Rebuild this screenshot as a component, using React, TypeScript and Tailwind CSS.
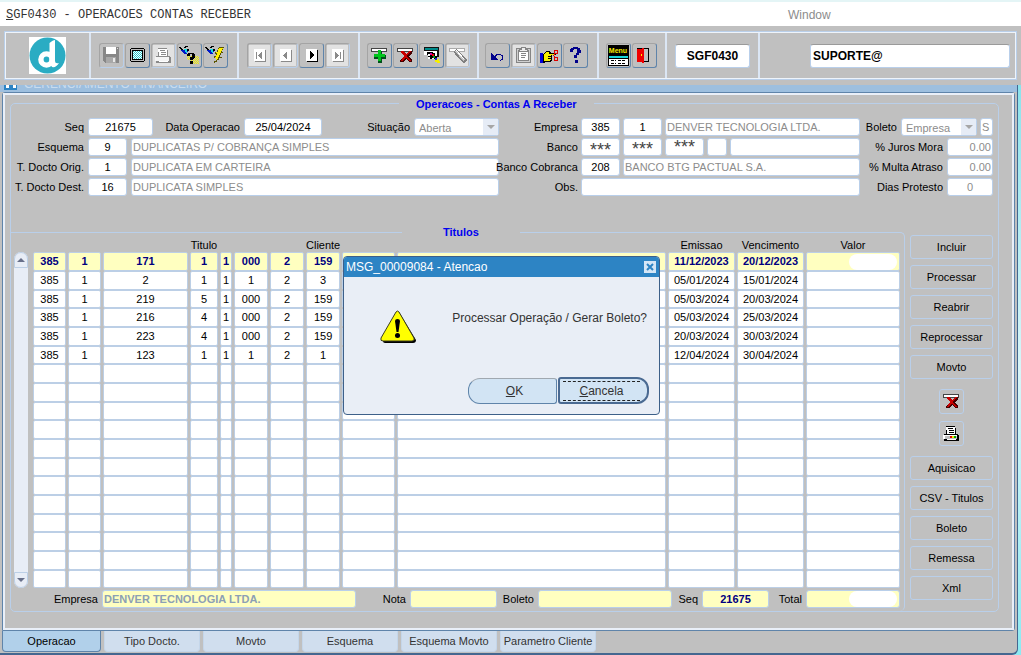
import type { InputHTMLAttributes, ReactNode } from "react"

interface Titulo {
  cells: string[]
  emissao: string
  vencimento: string
}

const titulos: Titulo[] = [
  { cells: ["385", "1", "171", "1", "1", "000", "2", "159"], emissao: "11/12/2023", vencimento: "20/12/2023" },
  { cells: ["385", "1", "2", "1", "1", "1", "2", "3"], emissao: "05/01/2024", vencimento: "15/01/2024" },
  { cells: ["385", "1", "219", "5", "1", "000", "2", "159"], emissao: "05/03/2024", vencimento: "20/03/2024" },
  { cells: ["385", "1", "216", "4", "1", "000", "2", "159"], emissao: "05/03/2024", vencimento: "25/03/2024" },
  { cells: ["385", "1", "223", "4", "1", "000", "2", "159"], emissao: "20/03/2024", vencimento: "30/03/2024" },
  { cells: ["385", "1", "123", "1", "1", "1", "2", "1"], emissao: "12/04/2024", vencimento: "30/04/2024" },
]

const TOTAL_ROWS = 18

const columnWidths = [
  "w-[33px]",
  "w-[33px]",
  "w-[85px]",
  "w-[28px]",
  "w-[12px]",
  "w-[34px]",
  "w-[34px]",
  "w-[33px]",
  "w-[53px]",
  "",
  "w-[67px]",
  "w-[67px]",
  "w-[94px]",
]

const headers = ["", "", "", "Titulo", "", "", "", "Cliente", "", "", "Emissao", "Vencimento", "Valor"]

const tabs = ["Operacao", "Tipo Docto.", "Movto", "Esquema", "Esquema Movto", "Parametro Cliente"]

/* ---------- icons ---------- */

function Icon({ children }: { children: ReactNode }) {
  return (
    <svg width="21" height="21" viewBox="0 0 21 21" shapeRendering="crispEdges" aria-hidden="true">
      {children}
    </svg>
  )
}

function Logo() {
  return (
    <svg width="37" height="37" viewBox="0 0 37 37" role="img" aria-label="Logo">
      <rect width="37" height="37" fill="#fff" />
      <circle cx="18.5" cy="18.5" r="18" fill="#2aacc3" />
      <circle cx="17.5" cy="22.5" r="5.6" fill="none" stroke="#fff" strokeWidth="5.4" />
      <path d="M20.500 6Q24 3 26 3V24Q26 27 30 26Q27 31 23 30L20.500 26Z" fill="#fff" />
    </svg>
  )
}

function SaveIcon() {
  return (
    <Icon>
      <path d="M2 2H18V18H4L2 16Z" fill="#878787" />
      <path d="M5 2H15V9H5Z" fill="#fff" />
      <path d="M5 12H15V18H5Z" fill="#a8a8a8" />
      <path d="M12 13H14V17H12Z" fill="#e8e8e8" />
      <path d="M16 3H17V4H16Z" fill="#ddd" />
    </Icon>
  )
}

function ScreenIcon() {
  return (
    <Icon>
      <path d="M4 3H17V4H18V16H17V17H4V16H3V4H4Z" fill="#000" />
      <path d="M4 4H17V16H4Z" fill="#c0c0c0" />
      <path d="M5 5H16V15H5Z" fill="#000" />
      <path d="M6 6H15V14H6Z" fill="#fff" />
      <path
        d="M6 6.500H15M7 7.500H15M6 8.500H15M7 9.500H15M6 10.500H15M7 11.500H15M6 12.500H15M7 13.500H15"
        stroke="#23c7cf"
        strokeDasharray="1 1"
      />
    </Icon>
  )
}

function PrintIcon({ color = false }: { color?: boolean }) {
  const ink = color ? "#000" : "#8a8a8a"
  return (
    <Icon>
      {!color && <path d="M0 0H21V21H0Z" fill="#e2e2e2" />}
      <path d="M5 3H14V5H15V11H5Z" fill={ink} />
      <path d="M5 4H14V11H6V7H5Z" fill="#fff" />
      <path d="M7 5.500H12M8 7.500H13M8 9.500H13" stroke={ink} />
      <path d="M3 11H17V12H18V18H3Z" fill={ink} />
      <path d="M2 12H16V16H2Z" fill={color ? "#fff" : "#f4f4f4"} />
      {color && <path d="M4 13H16V16H4Z" fill="#c0c0c0" />}
      {color && <path d="M9 13H11V15H9Z" fill="#e00000" />}
      {color && <path d="M11 13H13V15H11Z" fill="#e8e800" />}
      {color && <path d="M13 13H15V15H13Z" fill="#00a000" />}
      <path d="M6 16.500H15" stroke="#fff" />
    </Icon>
  )
}

function Bird() {
  return (
    <>
      <path d="M2 4L5 5L8 4L9 6L8 9H6L3 7Z" fill="#0018c8" />
      <path d="M5 4H8L8 7L7 8Z" fill="#15dbe0" />
      <path d="M0 2.500H2M1 3.500H3M2 4.500H4M5 2.500H7M6 1.500H9M8 4.500H10M8 5.500H10" stroke="#000" />
    </>
  )
}

function QueryIcon() {
  return (
    <Icon>
      <Bird />
      <path
        d="M8 11.500H20M9 12.500H20M8 13.500H20M9 14.500H20M12 15.500H20M13 16.500H20M12 17.500H20M13 18.500H20"
        stroke="#f4ee00"
        strokeDasharray="1 1"
      />
      <path d="M9 8H15V9H16V13H15V14H14V15H11V12H13V9H11V11H8V9H9Z" fill="#000" />
      <path d="M11 16H14V19H11Z" fill="#000" />
    </Icon>
  )
}

function ExecuteIcon() {
  return (
    <Icon>
      <Bird />
      <path d="M15 2H19V3H18V5H17V7H18V8H16V10H15V12H17V13H14V15H12V17H10V18H9V16H11V13H9V11H11V9H10V7H12V5H13V3Z" fill="#5b5400" />
      <path d="M14 3H18V4H17V6H16V8H15V10H14V12H13V14H12V15H11V13H10V12H11V10H12V8H11V7H13V5Z" fill="#fff000" />
    </Icon>
  )
}

function NavIcon({ d, disabled = true }: { d: string; disabled?: boolean }) {
  return (
    <Icon>
      {disabled && <path d="M0 0H21V21H0Z" fill="#e2e2e2" />}
      <path d="M6 5H17V17H6Z" fill={disabled ? "#8a8a8a" : "#000"} />
      <path d="M5 4H16V16H5Z" fill="#fff" />
      <path d={d} fill={disabled ? "#8a8a8a" : "#000"} />
    </Icon>
  )
}

function Strip() {
  return <path d="M2.500 3.500H17.500V6.500H2.500Z" fill="#fff" stroke="#444" />
}

function AddIcon() {
  return (
    <Icon>
      <Strip />
      <path d="M10 6H13V10H17V14H13V18H9V14H5V10H10Z" fill="#00511a" />
      <path d="M9 5H12V9H16V12H12V16H9V12H5V9H9Z" fill="#00c51c" />
    </Icon>
  )
}

function DeleteIcon() {
  return (
    <Icon>
      <Strip />
      <path d="M6 6H9L11 9L14 6H17V8L14 11L17 15V17H14L11 14L8 17H5V15L9 11L6 8Z" fill="#450000" />
      <path d="M6 6H8L11 9L14 6H16L12 11L16 16H14L11 13L7 16H6L9 11L6 7Z" fill="#c80000" />
    </Icon>
  )
}

function ClearIcon() {
  return (
    <Icon>
      <path d="M3 2H18V12H3Z" fill="#111" />
      <path d="M4 3H17V5H4Z" fill="#008b8b" />
      <path d="M3 6H16V14H3Z" fill="#fff" />
      <path d="M2 10H7V16H2Z" fill="#c0c0c0" />
      <path d="M6 7H12V8H14V11H16V14H13V13H11V14H9V12H7V10H6Z" fill="#000" />
      <path d="M9 8H11V10H9Z" fill="#e000a0" />
      <path d="M11 9H13V11H11Z" fill="#f00000" />
      <path d="M7 9H9V11H7Z" fill="#fff" />
      <path d="M12 11H14V13H12Z" fill="#00a020" />
      <path d="M14 13H16V15H14Z" fill="#1830d0" />
      <path d="M14 15H16V14H18V16H19V18H16V17H14Z" fill="#f6f000" />
    </Icon>
  )
}

function FlashlightIcon() {
  return (
    <Icon>
      <path d="M0 0H21V21H0Z" fill="#e2e2e2" />
      <path d="M2.500 3.500H17.500V6.500H2.500Z" fill="#fff" stroke="#aaa" />
      <path d="M7 6L9 4L12 6L20 15L17 19L8 9Z" fill="#808080" />
      <path d="M8 6L11 6L18 15L16 16Z" fill="#c8c8c8" />
      <path d="M9 5L17 14" stroke="#fff" />
    </Icon>
  )
}

function UndoIcon() {
  return (
    <Icon>
      <path d="M4 8V15H11Z" fill="#00008b" />
      <path d="M7 12.500L10 9.500H13L15.500 11V14L13 16" fill="none" stroke="#00008b" />
    </Icon>
  )
}

function ClipboardIcon() {
  return (
    <Icon>
      <path d="M0 0H21V21H0Z" fill="#e2e2e2" />
      <path d="M3.500 3.500H17.500V17.500H3.500Z" fill="#d0d0d0" stroke="#858585" />
      <path d="M5.500 5.500H15.500V15.500H5.500Z" fill="#fff" stroke="#858585" />
      <path d="M8.500 2.500H12.500V4.500H14.500V6.500H6.500V4.500H8.500Z" fill="#eee" stroke="#858585" />
      <path d="M8 8.500H13M8 10.500H13M8 12.500H12" stroke="#858585" />
    </Icon>
  )
}

function PointIcon() {
  return (
    <Icon>
      <path d="M1 8H4V18H1Z" fill="#0000d8" />
      <path d="M4 9H5V8H6V7H7V6H11V7H12V8H17V10H13V16H12V17H6V18H4Z" fill="#000" />
      <path d="M5 9H6V8H7V7H10V9H16V10H12V15H11V16H5Z" fill="#f7ee00" />
      <path d="M9 11.500H12M9 13.500H12" stroke="#000" />
      <path d="M14 10.500H15M15 9.500H16M15 11.500H16" stroke="#d00" />
      <path d="M15.500 5.500H18.500V8.500H15.500ZM15.500 12.500H18.500V15.500H15.500Z" fill="none" stroke="#d00" />
    </Icon>
  )
}

function HelpIcon() {
  return (
    <Icon>
      <path d="M5 4H6V3H8V2H13V3H15V5H16V8H14V10H12V13H9V10H11V8H12V4H9V5H8V7H5Z" fill="#00008b" />
      <path d="M10 15H13V18H10Z" fill="#00008b" />
    </Icon>
  )
}

function MenuIcon() {
  return (
    <Icon>
      <path d="M0 0H21V11H0Z" fill="#000" />
      <text x="10" y="8" textAnchor="middle" fontSize="7" fontWeight="700" fill="#f6ee00">
        Menu
      </text>
      <path d="M0 10H21V21H0Z" fill="#000" />
      <path d="M1 11H20V13H1Z" fill="#18d5dc" />
      <path d="M1 14H20V20H1Z" fill="#fff" />
      <path d="M3 15.500H8M10 15.500H18M3 18.500H8M10 18.500H18" stroke="#000" strokeDasharray="3 1" />
    </Icon>
  )
}

function ExitIcon() {
  return (
    <Icon>
      <path d="M3 3H15V17H3Z" fill="#000" />
      <path d="M10 4H14V16H10Z" fill="#c0c0c0" />
      <path d="M3 4H8V3H10V18H8V17H3Z" fill="#f00000" />
      <path d="M7 9H8V11H7Z" fill="#fff000" />
    </Icon>
  )
}

function WarningIcon() {
  return (
    <svg width="37" height="34" viewBox="0 0 37 34" role="img" aria-label="Atencao">
      <path d="M19 2L36 30Q36 33 33 33H5Q3 33 3 31Z" fill="#000" />
      <path d="M16 2Q17.500 0 19 2L34 28Q35 31 32 31H3Q0 31 1 28Z" fill="#ffff00" stroke="#3b3b20" />
      <path d="M15 11Q15 9 17.500 9Q20 9 20 11L18.500 22H16.500Z" fill="#000" />
      <circle cx="17.500" cy="25.500" r="2.500" fill="#000" />
    </svg>
  )
}

/* ---------- controls ---------- */

interface FieldProps extends InputHTMLAttributes<HTMLInputElement> {
  value: string
}

function Field({ className = "", value, ...rest }: FieldProps) {
  return (
    <input
      type="text"
      defaultValue={value}
      className={`h-[18px] min-w-0 rounded-[3px] border border-[#b9cfea] px-px outline-none ${className}`}
      {...rest}
    />
  )
}

function Label({ htmlFor, className = "", children }: { htmlFor: string; className?: string; children: ReactNode }) {
  return (
    <label htmlFor={htmlFor} className={`shrink-0 text-right whitespace-nowrap ${className}`}>
      {children}
    </label>
  )
}

function Dropdown({ id, value, className }: { id: string; value: string; className: string }) {
  return (
    <div className={`relative h-[18px] ${className}`}>
      <select
        id={id}
        defaultValue={value}
        className="h-[18px] w-full appearance-none rounded-[3px] border border-[#b9cfea] bg-white pt-[2px] pl-1 text-[11px] leading-[14px] text-[#8c8c8c]"
      >
        <option>{value}</option>
      </select>
      <span className="pointer-events-none absolute top-px right-px flex h-4 w-[15px] items-center justify-center bg-[#e6ecf6]">
        <svg width="8" height="4" viewBox="0 0 8 4" aria-hidden="true">
          <path d="M0 0H8L4 4Z" fill="#a6a6a6" />
        </svg>
      </span>
    </div>
  )
}

function ToolButton({ label, disabled, children }: { label: string; disabled?: boolean; children: ReactNode }) {
  return (
    <button
      aria-label={label}
      disabled={disabled}
      className={`flex h-[25px] w-[25px] items-center justify-center rounded-[3px] border border-t-[#a4a4a4] border-l-[#a4a4a4] ${
        disabled ? "border-r-[#b9cfea] border-b-[#b9cfea]" : "border-r-[#5f84aa] border-b-[#5f84aa]"
      }`}
    >
      {children}
    </button>
  )
}

function ToolSection({ className, children }: { className: string; children: ReactNode }) {
  return (
    <div className={`flex shrink-0 items-center gap-px border-r-2 border-r-[#dbe6f4] ${className}`}>{children}</div>
  )
}

function SideButton({ children }: { children: ReactNode }) {
  return <button className="h-6 w-full rounded-[3px] border border-[#b9cfea]">{children}</button>
}

function SideIconButton({ label, children }: { label: string; children: ReactNode }) {
  return (
    <button
      aria-label={label}
      className="mx-auto flex h-[25px] w-[25px] items-center justify-center rounded-[3px] border border-[#b9cfea]"
    >
      {children}
    </button>
  )
}

/* ---------- sections ---------- */

function Toolbar() {
  return (
    <div className="pt-[5px] pr-1 pb-[5px] pl-1">
      <div className="flex h-[49px] border border-[#b9cfea] bg-[#c0c0c0] outline-1 -outline-offset-2 outline-[#eef4fb]">
        <ToolSection className="w-[86px] justify-center">
          <Logo />
        </ToolSection>
        <ToolSection className="w-[148px] pl-2">
          <ToolButton label="Salvar" disabled><SaveIcon /></ToolButton>
          <ToolButton label="Tela"><ScreenIcon /></ToolButton>
          <ToolButton label="Imprimir" disabled><PrintIcon /></ToolButton>
          <ToolButton label="Consultar"><QueryIcon /></ToolButton>
          <ToolButton label="Executar"><ExecuteIcon /></ToolButton>
        </ToolSection>
        <ToolSection className="w-[121px] pl-2">
          <ToolButton label="Primeiro" disabled><NavIcon d="M7 7H8V14H7ZM13 7V14L9 10.500Z" /></ToolButton>
          <ToolButton label="Anterior" disabled><NavIcon d="M12 7V14L8 10.500Z" /></ToolButton>
          <ToolButton label="Proximo"><NavIcon d="M9 6V14L13 10Z" disabled={false} /></ToolButton>
          <ToolButton label="Ultimo" disabled><NavIcon d="M8 7V14L12 10.500ZM13 7H14V14H13Z" /></ToolButton>
        </ToolSection>
        <ToolSection className="w-[119px] pl-[7px]">
          <ToolButton label="Inserir registro"><AddIcon /></ToolButton>
          <ToolButton label="Excluir registro"><DeleteIcon /></ToolButton>
          <ToolButton label="Limpar registro"><ClearIcon /></ToolButton>
          <ToolButton label="Lista de valores" disabled><FlashlightIcon /></ToolButton>
        </ToolSection>
        <ToolSection className="w-[120px] pl-[6px]">
          <ToolButton label="Desfazer"><UndoIcon /></ToolButton>
          <ToolButton label="Colar" disabled><ClipboardIcon /></ToolButton>
          <ToolButton label="Recortar"><PointIcon /></ToolButton>
          <ToolButton label="Ajuda"><HelpIcon /></ToolButton>
        </ToolSection>
        <ToolSection className="w-[68px] pl-[7px]">
          <ToolButton label="Menu"><MenuIcon /></ToolButton>
          <ToolButton label="Sair"><ExitIcon /></ToolButton>
        </ToolSection>
        <ToolSection className="w-[93px] justify-center">
          <input
            aria-label="Programa"
            defaultValue="SGF0430"
            className="h-6 w-[75px] rounded-[3px] border border-[#b9cfea] border-t-[#9a9a9a] bg-white text-center text-[12px] font-bold"
          />
        </ToolSection>
        <div className="flex flex-1 items-center justify-end pr-[6px]">
          <input
            aria-label="Usuario"
            defaultValue="SUPORTE@"
            className="h-6 w-[200px] rounded-[3px] border border-[#b9cfea] border-t-[#9a9a9a] bg-white px-[2px] text-[12px] font-bold"
          />
        </div>
      </div>
    </div>
  )
}

function OperacaoForm() {
  return (
    <div className="flex pt-2 pr-[5px]">
      <div className="flex min-w-0 flex-[488_1_0%] flex-col gap-[2px]">
        <div className="flex gap-1">
          <Label htmlFor="seq" className="w-[73px]">Seq</Label>
          <Field id="seq" value="21675" className="w-[65px] bg-white text-center" />
          <Label htmlFor="data" className="w-[83px]">Data Operacao</Label>
          <Field id="data" value="25/04/2024" className="w-[78px] bg-white text-center" />
          <Label htmlFor="situacao" className="w-[84px]">Situação</Label>
          <Dropdown id="situacao" value="Aberta" className="min-w-0 flex-1" />
        </div>
        <div className="flex gap-1">
          <Label htmlFor="esquema" className="w-[73px]">Esquema</Label>
          <Field id="esquema" value="9" className="w-[39px] bg-white text-center" />
          <Field aria-label="Descricao do esquema" value="DUPLICATAS P/ COBRANÇA SIMPLES" className="flex-1 bg-white text-[#8c8c8c]" />
        </div>
        <div className="flex gap-1">
          <Label htmlFor="docto-orig" className="w-[73px]">T. Docto Orig.</Label>
          <Field id="docto-orig" value="1" className="w-[39px] bg-white text-center" />
          <Field aria-label="Descricao do docto de origem" value="DUPLICATA EM CARTEIRA" className="flex-1 bg-white text-[#8c8c8c]" />
        </div>
        <div className="flex gap-1">
          <Label htmlFor="docto-dest" className="w-[73px]">T. Docto Dest.</Label>
          <Field id="docto-dest" value="16" className="w-[39px] bg-white text-center" />
          <Field aria-label="Descricao do docto de destino" value="DUPLICATA SIMPLES" className="flex-1 bg-white text-[#8c8c8c]" />
        </div>
      </div>

      <div className="flex min-w-0 flex-[361_1_0%] flex-col gap-[2px]">
        <div className="flex gap-[3px]">
          <Label htmlFor="empresa" className="w-[79px]">Empresa</Label>
          <Field id="empresa" value="385" className="w-[39px] bg-white text-center" />
          <Field aria-label="Filial" value="1" className="w-[39px] bg-white text-center" />
          <Field aria-label="Nome da empresa" value="DENVER TECNOLOGIA LTDA." className="flex-1 bg-white text-[#8c8c8c]" />
        </div>
        <div className="flex gap-[3px]">
          <Label htmlFor="banco" className="w-[79px]">Banco</Label>
          <Field id="banco" value="***" className="w-[39px] bg-white pt-[6px] text-center text-[18px] text-[#444]" />
          <Field aria-label="Agencia" value="***" className="w-[39px] bg-white pt-[4px] text-center text-[18px] text-[#444]" />
          <Field aria-label="Conta" value="***" className="w-[39px] bg-white pt-px text-center text-[18px] text-[#444]" />
          <Field aria-label="Digito" value="" className="w-5 bg-white" />
          <Field aria-label="Nome do banco" value="" className="flex-1 bg-white" />
        </div>
        <div className="flex gap-[3px]">
          <Label htmlFor="banco-cobranca" className="flex w-[79px] justify-end">Banco Cobranca</Label>
          <Field id="banco-cobranca" value="208" className="w-[39px] bg-white text-center" />
          <Field aria-label="Nome do banco de cobranca" value="BANCO BTG PACTUAL S.A." className="flex-1 bg-white text-[#8c8c8c]" />
        </div>
        <div className="flex gap-[3px]">
          <Label htmlFor="obs" className="w-[79px]">Obs.</Label>
          <Field id="obs" value="" className="flex-1 bg-white" />
        </div>
      </div>

      <div className="flex w-[133px] shrink-0 flex-col gap-[2px]">
        <div className="flex gap-[3px]">
          <Label htmlFor="boleto-tipo" className="w-[38px] pr-px">Boleto</Label>
          <Dropdown id="boleto-tipo" value="Empresa" className="min-w-0 flex-1" />
          <Field aria-label="Emite boleto" value="S" className="w-[13px] bg-white text-[#8c8c8c]" />
        </div>
        <div className="flex gap-1">
          <Label htmlFor="juros" className="flex-1">% Juros Mora</Label>
          <Field id="juros" value="0.00" className="w-[46px] bg-white text-right text-[#8c8c8c]" />
        </div>
        <div className="flex gap-1">
          <Label htmlFor="multa" className="flex-1">% Multa Atraso</Label>
          <Field id="multa" value="0.00" className="w-[46px] bg-white text-right text-[#8c8c8c]" />
        </div>
        <div className="flex gap-1">
          <Label htmlFor="protesto" className="flex-1">Dias Protesto</Label>
          <Field id="protesto" value="0" className="w-[46px] bg-white text-center text-[#8c8c8c]" />
        </div>
      </div>
    </div>
  )
}

function TitulosTable() {
  const rows = Array.from({ length: TOTAL_ROWS }, (_, i) => titulos[i])

  return (
    <table className="min-w-0 flex-1 table-fixed border-separate border-spacing-x-[2px] border-spacing-y-0 text-center leading-[13px]">
      <colgroup>
        {columnWidths.map((width, i) => (
          <col key={i} className={width} />
        ))}
      </colgroup>
      <thead>
        <tr className="h-[13px]">
          {headers.map((header, i) => (
            <th key={i} className="p-0 font-normal whitespace-nowrap">
              {header}
            </th>
          ))}
        </tr>
      </thead>
      <tbody>
        {rows.map((row, i) => {
          const values = row ? [...row.cells, "", "", row.emissao, row.vencimento, ""] : headers.map(() => "")
          return (
            <tr
              key={i}
              className={`${i % 3 === 2 ? "h-[18px]" : "h-[19px]"} ${
                i === 0 ? "font-bold text-[#000080]" : "text-black"
              }`}
            >
              {values.map((value, j) => (
                <td
                  key={j}
                  className={`rounded-[2px] border border-[#bccfe6] p-0 whitespace-nowrap ${
                    i === 0 ? "bg-[#ffffc0]" : "bg-white"
                  }`}
                >
                  {i === 0 && j === 12 ? (
                    <span className="mr-[2px] ml-auto block h-4 w-12 rounded-full bg-white" />
                  ) : (
                    value
                  )}
                </td>
              ))}
            </tr>
          )
        })}
      </tbody>
    </table>
  )
}

function ScrollBar() {
  return (
    <div className="mt-[13px] mr-[3px] flex w-[14px] shrink-0 flex-col justify-between rounded-full bg-[#e8edf6]">
      <button aria-label="Rolar para cima" className="flex h-4 items-center justify-center rounded-t-full border border-[#bccfe6]">
        <svg width="8" height="4" viewBox="0 0 8 4" aria-hidden="true">
          <path d="M0 4H8L4 0Z" fill="#68708a" />
        </svg>
      </button>
      <button aria-label="Rolar para baixo" className="flex h-4 items-center justify-center rounded-b-full border border-[#bccfe6]">
        <svg width="8" height="4" viewBox="0 0 8 4" aria-hidden="true">
          <path d="M0 0H8L4 4Z" fill="#68708a" />
        </svg>
      </button>
    </div>
  )
}

function TitulosFooter() {
  return (
    <div className="mt-[2px] flex gap-1 pr-1 pb-[3px]">
      <Label htmlFor="t-empresa" className="w-[87px]">Empresa</Label>
      <Field id="t-empresa" value="DENVER TECNOLOGIA LTDA." className="flex-1 bg-[#ffffc0] font-bold text-[#8ca0b4]" />
      <Label htmlFor="t-nota" className="w-[46px]">Nota</Label>
      <Field id="t-nota" value="" className="w-[87px] bg-[#ffffc0]" />
      <Label htmlFor="t-boleto" className="w-[33px]">Boleto</Label>
      <Field id="t-boleto" value="" className="w-[134px] bg-[#ffffc0]" />
      <Label htmlFor="t-seq" className="w-[22px]">Seq</Label>
      <Field id="t-seq" value="21675" className="w-[67px] bg-[#ffffc0] text-center font-bold text-[#000080]" />
      <Label htmlFor="t-total" className="w-[29px]">Total</Label>
      <div className="relative flex w-[94px]">
        <Field id="t-total" value="" className="w-full bg-[#ffffc0]" />
        <span className="absolute top-px right-[3px] h-4 w-12 rounded-full bg-white" />
      </div>
    </div>
  )
}

function SideActions() {
  return (
    <div className="flex w-[93px] shrink-0 flex-col gap-[6px] pt-[10px] pr-[5px] pl-[5px]">
      <SideButton>Incluir</SideButton>
      <SideButton>Processar</SideButton>
      <SideButton>Reabrir</SideButton>
      <SideButton>Reprocessar</SideButton>
      <SideButton>Movto</SideButton>
      <div className="flex flex-col gap-[7px] py-1">
        <SideIconButton label="Excluir titulo"><DeleteIcon /></SideIconButton>
        <SideIconButton label="Imprimir titulo"><PrintIcon color /></SideIconButton>
      </div>
      <SideButton>Aquisicao</SideButton>
      <SideButton>CSV - Titulos</SideButton>
      <SideButton>Boleto</SideButton>
      <SideButton>Remessa</SideButton>
      <SideButton>Xml</SideButton>
    </div>
  )
}

function MessageDialog() {
  return (
    <div
      role="dialog"
      aria-labelledby="msg-title"
      className="absolute top-[256px] left-[343px] w-[317px] overflow-hidden rounded-[4px] border border-[#3d6089] bg-[#e9eef6] text-[12px] text-[#333]"
    >
      <div className="flex h-5 items-center justify-between bg-[#2d84c4] pr-[3px] pl-[2px] text-white">
        <span id="msg-title">MSG_00009084 - Atencao</span>
        <button aria-label="Fechar" className="flex h-3 w-3 items-center justify-center bg-[#d5e6f6]">
          <svg width="8" height="8" viewBox="0 0 8 8" aria-hidden="true">
            <path d="M1 1L7 7M7 1L1 7" stroke="#2d84c4" strokeWidth="2" />
          </svg>
        </button>
      </div>
      <div className="flex items-start justify-between pt-[33px] pr-3 pl-9">
        <WarningIcon />
        <p className="leading-4">Processar Operação / Gerar Boleto?</p>
      </div>
      <div className="flex items-center justify-end pt-[33px] pr-[10px] pb-[10px]">
        <button className="mr-px h-[26px] w-[89px] rounded-l-[12px] rounded-r-[3px] border border-[#5f84aa] border-t-[#a0a8b0] bg-[#d2e4f4] pl-1">
          <u>O</u>K
        </button>
        <button className="flex h-[27px] w-[91px] items-center justify-center rounded-l-[3px] rounded-r-[12px] border-2 border-[#4a6a92] bg-[#d2e4f4] pr-1">
          <span className="w-[77px] border-y border-dashed border-[#222] leading-[18px]">
            <u>C</u>ancela
          </span>
        </button>
      </div>
    </div>
  )
}

export default function App() {
  return (
    <div className="relative bg-[#c0c0c0] font-['Liberation_Sans',Arial,sans-serif] text-[11px] leading-[18px] text-black">
      <header className="flex h-[26px] items-center border-t-2 border-[#e4f5f6] bg-white">
        <h1 className="w-[788px] pt-[2px] pl-[6px] font-['Liberation_Mono','Courier_New',monospace] text-[12px] text-[#333]">
          <u>S</u>GF0430 - OPERACOES CONTAS RECEBER
        </h1>
        <button className="pt-px text-[12px] text-[#8c8c8c]">Window</button>
      </header>

      <Toolbar />

      <div className="flex bg-linear-to-b from-[#8ae3ec] via-[#d8f5f8] to-[#8ceaf2]">
        <main className="mr-[3px] min-w-0 flex-1 rounded-br-[6px] border-r border-b-2 border-[#456790] bg-[#c0c0c0]">
          <div className="flex h-[7px] items-end overflow-hidden bg-[#9dbfdf] pl-1">
            <span className="mb-[2px] flex h-[5px] w-[13px] justify-center gap-1 bg-[#2d84c4]">
              <span className="h-[3px] w-[3px] bg-white" />
              <span className="h-[3px] w-[3px] bg-white" />
            </span>
            <span className="ml-[7px] text-[12px] leading-[16px] text-[#c9dcee]">GERENCIAMENTO FINANCEIRO</span>
          </div>

          <div className="mr-[2px] ml-[2px] rounded-tl-[3px] rounded-r-[3px] border border-[#5f84aa]">
            <div className="border-2 border-[#e9eff8] pt-px pr-[13px] pb-4 pl-[5px]">
              <fieldset className="min-w-0 rounded-[5px] border border-[#b9cfea]">
                <legend className="ml-[388px] h-[14px] px-[17px] text-[11px] leading-[16px] font-bold text-[#0000f0]">
                  Operacoes - Contas A Receber
                </legend>
                <OperacaoForm />
                <div className="mt-[29px] flex">
                  <fieldset className="min-w-0 flex-1 rounded-tr-[5px] rounded-br-[5px] border-t border-r border-[#b9cfea]">
                    <legend className="ml-[391px] h-[14px] px-[41px] text-[11px] leading-[14px] font-bold text-[#0000f0]">
                      Titulos
                    </legend>
                    <div className="flex pr-[2px] pl-[3px]">
                      <ScrollBar />
                      <TitulosTable />
                    </div>
                    <TitulosFooter />
                  </fieldset>
                  <SideActions />
                </div>
              </fieldset>
            </div>
          </div>

          <nav className="flex gap-[3px] pb-px pl-[2px]">
            {tabs.map((tab, i) => (
              <button
                key={tab}
                className={`h-[21px] rounded-b-[4px] border border-t-0 text-center whitespace-nowrap ${
                  i === 0 ? "w-[99px] border-[#5f84aa] bg-[#b1d0ea]" : "w-24 border-[#c4d6ea] bg-[#d0deee] text-[#333]"
                }`}
              >
                {tab}
              </button>
            ))}
          </nav>
        </main>
      </div>

      <MessageDialog />
    </div>
  )
}
